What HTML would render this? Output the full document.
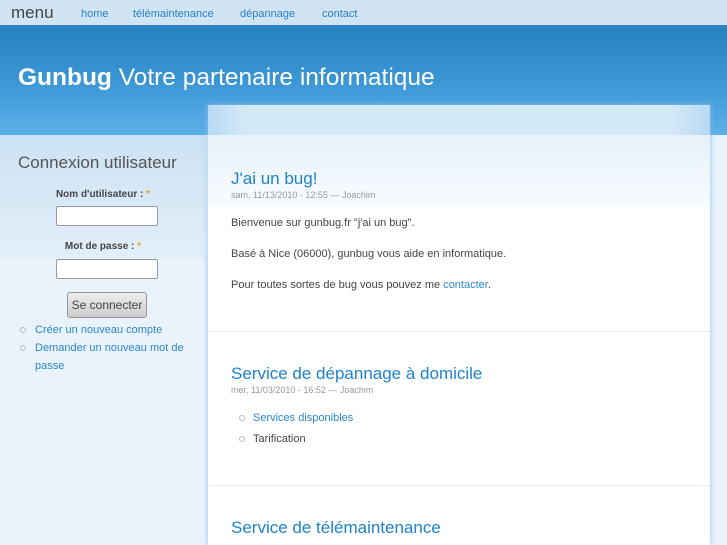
<!DOCTYPE html>
<html><head><meta charset="utf-8"><style>
*{margin:0;padding:0;box-sizing:border-box}
body{width:727px;height:545px;overflow:hidden;font-family:"Liberation Sans","DejaVu Sans",sans-serif;background:#eaf3fc;position:relative}
.top{position:absolute;left:0;top:0;width:727px;height:27px;background:#d0e4f3;border-bottom:2px solid #2f7fc0}
.top .m{position:absolute;left:11px;top:3px;font-size:17px;color:#444}
.top a{position:absolute;top:8px;font-size:11px;color:#2a7fc8;text-decoration:none}
.hdr{position:absolute;left:0;top:27px;width:727px;height:108px;background:linear-gradient(#2582c3,#3b96d4 50%,#5cb0e8)}
.hdr h1{position:absolute;left:18px;top:37px;font-size:24.5px;font-weight:normal;color:#fff}
.hdr h1 b{font-weight:bold}
.side{position:absolute;left:0;top:135px;width:206px;height:410px;background:#eaf3fc}
.side .sb{position:absolute;left:0;top:0;width:206px;height:123px;background:linear-gradient(#cce2f3,#e2eff9)}
.side h2{position:absolute;left:18px;top:18px;font-size:17px;font-weight:normal;color:#555}
.lbl{position:absolute;font-size:10px;font-weight:bold;color:#444;width:206px;text-align:center;left:0}
.lbl span{color:#f0a020}
.inp{position:absolute;left:56px;width:102px;height:20px;background:#fff;border:1px solid #999;border-radius:2px}
.btn{position:absolute;left:67px;top:157px;width:80px;height:26px;border:1px solid #999;border-radius:3px;background:linear-gradient(#eee,#ccc);font-size:12px;color:#444;text-align:center;line-height:24px}
.side ul{position:absolute;left:20px;top:186px;list-style:none;font-size:11px;line-height:18px}
.side li{position:relative;padding-left:15px;color:#2a86cc;width:180px}
.c{display:inline-block;position:absolute;left:0;top:6px;width:6px;height:6px;border:1px solid #bbb;border-radius:50%}
.main{position:absolute;left:208px;top:105px;width:502px;height:440px;background:#fff;box-shadow:0 0 6px #8fbfe6}
.main .tp{position:absolute;left:0;top:0;width:502px;height:30px;background:linear-gradient(90deg,#b7d9f3,#d5eaf8 8%,#d5eaf8 92%,#b7d9f3)}
.main .g{position:absolute;left:0;top:30px;width:502px;height:75px;background:linear-gradient(#e6f1fa,#f7fbfe 90%,#fff)}
.post{position:absolute;left:23px;width:470px}
.post h2{font-size:17px;font-weight:normal;color:#1f82cc}
.meta{font-size:9px;color:#999;margin-top:1px}
.post p{font-size:11px;color:#444;margin-top:17px}
.post a{color:#2a86cc}
.sep{position:absolute;left:0;width:502px;height:1px;background:#e8eef3}
.post ul{list-style:none;font-size:11px;margin-top:13px;margin-left:8px;line-height:21px}
.post li{position:relative;padding-left:14px;color:#444}
</style></head><body>
<div class="top"><span class="m">menu</span><a style="left:81px">home</a><a style="left:133px">télémaintenance</a><a style="left:240px">dépannage</a><a style="left:322px">contact</a></div>
<div class="hdr"><h1><b>Gunbug</b> Votre partenaire informatique</h1></div>
<div class="side"><div class="sb"></div>
<h2>Connexion utilisateur</h2>
<div class="lbl" style="top:54px">Nom d'utilisateur : <span>*</span></div>
<div class="inp" style="top:71px"></div>
<div class="lbl" style="top:106px">Mot de passe : <span>*</span></div>
<div class="inp" style="top:124px"></div>
<div class="btn">Se connecter</div>
<ul><li><i class="c"></i>Créer un nouveau compte</li><li><i class="c"></i>Demander un nouveau mot de passe</li></ul>
</div>
<div class="main"><div class="tp"></div><div class="g"></div>
<div class="post" style="top:64px"><h2>J'ai un bug!</h2><div class="meta">sam, 11/13/2010 - 12:55 — Joachim</div>
<p>Bienvenue sur gunbug.fr "j'ai un bug".</p><p style="margin-top:19px">Basé à Nice (06000), gunbug vous aide en informatique.</p><p style="margin-top:19px">Pour toutes sortes de bug vous pouvez me <a>contacter</a>.</p></div>
<div class="sep" style="top:226px"></div>
<div class="post" style="top:259px"><h2>Service de dépannage à domicile</h2><div class="meta">mer, 11/03/2010 - 16:52 — Joachim</div>
<ul><li><i class="c" style="top:7px"></i><a>Services disponibles</a></li><li><i class="c" style="top:7px"></i>Tarification</li></ul></div>
<div class="sep" style="top:380px"></div>
<div class="post" style="top:413px"><h2>Service de télémaintenance</h2></div>
</div>
</body></html>
